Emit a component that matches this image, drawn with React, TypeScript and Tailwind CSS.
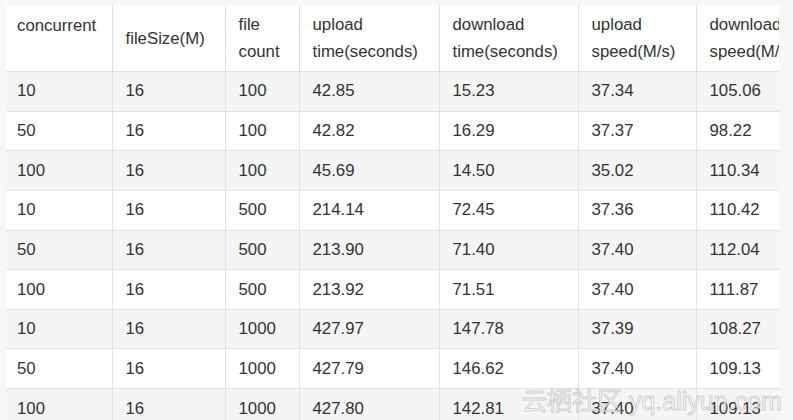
import React from 'react';

const rows = [
  ['10', '16', '100', '42.85', '15.23', '37.34', '105.06'],
  ['50', '16', '100', '42.82', '16.29', '37.37', '98.22'],
  ['100', '16', '100', '45.69', '14.50', '35.02', '110.34'],
  ['10', '16', '500', '214.14', '72.45', '37.36', '110.42'],
  ['50', '16', '500', '213.90', '71.40', '37.40', '112.04'],
  ['100', '16', '500', '213.92', '71.51', '37.40', '111.87'],
  ['10', '16', '1000', '427.97', '147.78', '37.39', '108.27'],
  ['50', '16', '1000', '427.79', '146.62', '37.40', '109.13'],
  ['100', '16', '1000', '427.80', '142.81', '37.40', '109.13'],
];

const widths = ['w-[106px]', 'w-[113px]', 'w-[74px]', 'w-[140px]', 'w-[139px]', 'w-[118px]', 'w-[140px]'];

export default function App() {
  return (
    <div className="relative w-[793px] h-[420px] overflow-hidden bg-[#f7f7f7] pt-[5px] pl-[6px] font-['Liberation_Sans',Arial,sans-serif] text-[16.8px] text-[#333]">
      <div className="w-[773px] overflow-hidden bg-white">
        <table className="table-fixed border-collapse w-[830px]">
          <colgroup>
            {widths.map((w, i) => (
              <col key={i} className={w} />
            ))}
          </colgroup>
          <thead>
            <tr className="h-[66.5px]">
              <th className="align-top pt-[7px] pl-[11px] text-left font-normal leading-[27px]">concurrent</th>
              <th className="align-middle pl-[13px] text-left font-normal leading-[27px] border-l border-[#ddd]">fileSize(M)</th>
              <th className="align-middle pl-[13px] text-left font-normal leading-[27px] border-l border-[#ddd]">file<br />count</th>
              <th className="align-middle pl-[13px] text-left font-normal leading-[27px] border-l border-[#ddd]">upload<br />time(seconds)</th>
              <th className="align-middle pl-[13px] text-left font-normal leading-[27px] border-l border-[#ddd]">download<br />time(seconds)</th>
              <th className="align-middle pl-[13px] text-left font-normal leading-[27px] border-l border-[#ddd]">upload<br />speed(M/s)</th>
              <th className="align-middle pl-[13px] text-left font-normal leading-[27px] border-l border-[#ddd] whitespace-nowrap">download<br />speed(M/s)</th>
            </tr>
          </thead>
          <tbody>
            {rows.map((r, i) => (
              <tr key={i} className={i % 2 === 0 ? 'h-[39.65px] bg-[#f5f5f5]' : 'h-[39.65px] bg-white'}>
                {r.map((c, j) => (
                  <td
                    key={j}
                    className={
                      j === 0
                        ? 'p-0 pl-[11px] border-t border-[#e2e2e2] align-middle leading-[20px]'
                        : 'p-0 pl-[13px] border-t border-l border-[#e2e2e2] align-middle leading-[20px]'
                    }
                  >
                    {c}
                  </td>
                ))}
              </tr>
            ))}
          </tbody>
        </table>
      </div>
      <div className="absolute left-[522px] top-[386px] whitespace-nowrap text-[25px] leading-[30px] text-white/70 [-webkit-text-stroke:1px_rgba(140,140,140,0.4)] font-['Liberation_Sans','Noto_Sans_CJK_SC',sans-serif]">
        云栖社区 yq.aliyun.com
      </div>
    </div>
  );
}
